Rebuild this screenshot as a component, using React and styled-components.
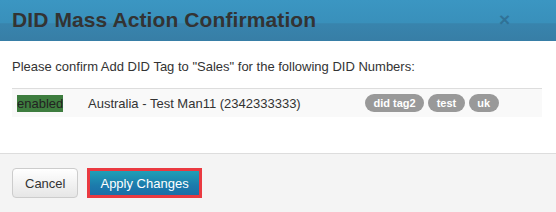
import React from "react";
import styled, { createGlobalStyle } from "styled-components";

const Global = createGlobalStyle`
  html, body { margin: 0; padding: 0; background: #fff; overflow: hidden; }
  body { font-family: "Liberation Sans", Arial, sans-serif; color: #333; }
  * { box-sizing: border-box; }
`;

const Dialog = styled.div`
  width: 556px;
  height: 212px;
  display: flex;
  flex-direction: column;
  background: #fff;
`;

const Header = styled.div`
  height: 45px;
  padding: 0 12px;
  display: flex;
  align-items: center;
  justify-content: space-between;
  background: linear-gradient(to bottom, #3b96c2 0%, #3990bb 55%, #3884ad 58%, #377ea6 100%);
`;

const Title = styled.h1`
  margin: 0 0 2px;
  font-size: 21px;
  font-weight: bold;
  color: #333;
  letter-spacing: 0.1px;
`;

const Close = styled.span`
  margin-right: 34px;
  margin-bottom: 2px;
  font-size: 19px;
  font-weight: bold;
  line-height: 1;
  color: #2f6b8e;
  opacity: 0.8;
`;

const Body = styled.div`
  padding: 17px 14px 36px 12px;
`;

const Message = styled.p`
  margin: 0 0 12px;
  font-size: 13px;
  line-height: 18px;
  color: #333;
`;

const Row = styled.div`
  display: grid;
  grid-template-columns: 71px 277px 1fr;
  border-top: 1px solid #ddd;
  background: #f9f9f9;
`;

const Cell = styled.div`
  padding: 5px;
  font-size: 13px;
  line-height: 17px;
  color: #333;
  display: flex;
  align-items: center;
  gap: 4px;
`;

const Status = styled.span`
  background: #3e7d3f;
  color: #222;
`;

const Tag = styled.span`
  display: inline-flex;
  align-items: center;
  height: 18px;
  padding: 0 8.5px;
  border-radius: 9px;
  background: #999;
  color: #fff;
  font-size: 11px;
  font-weight: bold;
`;

const Footer = styled.div`
  flex: 1;
  border-top: 1px solid #ddd;
  background: #f4f4f4;
  padding: 14px 12px;
  display: flex;
  align-items: flex-start;
  gap: 9px;
`;

const Button = styled.button`
  height: 30px;
  font-family: "Liberation Sans", Arial, sans-serif;
  font-size: 13px;
  cursor: pointer;
  padding: 0 12px;
  border-radius: 4px;
  border: 1px solid #ccc;
  color: #333;
  background: linear-gradient(to bottom, #ffffff 0%, #e6e6e6 100%);
`;

const PrimaryButton = styled(Button)`
  padding: 0 10px;
  border-radius: 0;
  border: 3px solid #ea3a41;
  color: #fff;
  background: linear-gradient(to bottom, #1f9fb6 0%, #1c7bac 60%, #1b6ea7 100%);
`;

export default function App() {
  const tags = ["did tag2", "test", "uk"];
  return (
    <Dialog>
      <Global />
      <Header>
        <Title>DID Mass Action Confirmation</Title>
        <Close>×</Close>
      </Header>
      <Body>
        <Message>
          Please confirm Add DID Tag to "Sales" for the following DID Numbers:
        </Message>
        <Row>
          <Cell>
            <Status>enabled</Status>
          </Cell>
          <Cell>Australia - Test Man11 (2342333333)</Cell>
          <Cell>
            {tags.map((t) => (
              <Tag key={t}>{t}</Tag>
            ))}
          </Cell>
        </Row>
      </Body>
      <Footer>
        <Button>Cancel</Button>
        <PrimaryButton>Apply Changes</PrimaryButton>
      </Footer>
    </Dialog>
  );
}
